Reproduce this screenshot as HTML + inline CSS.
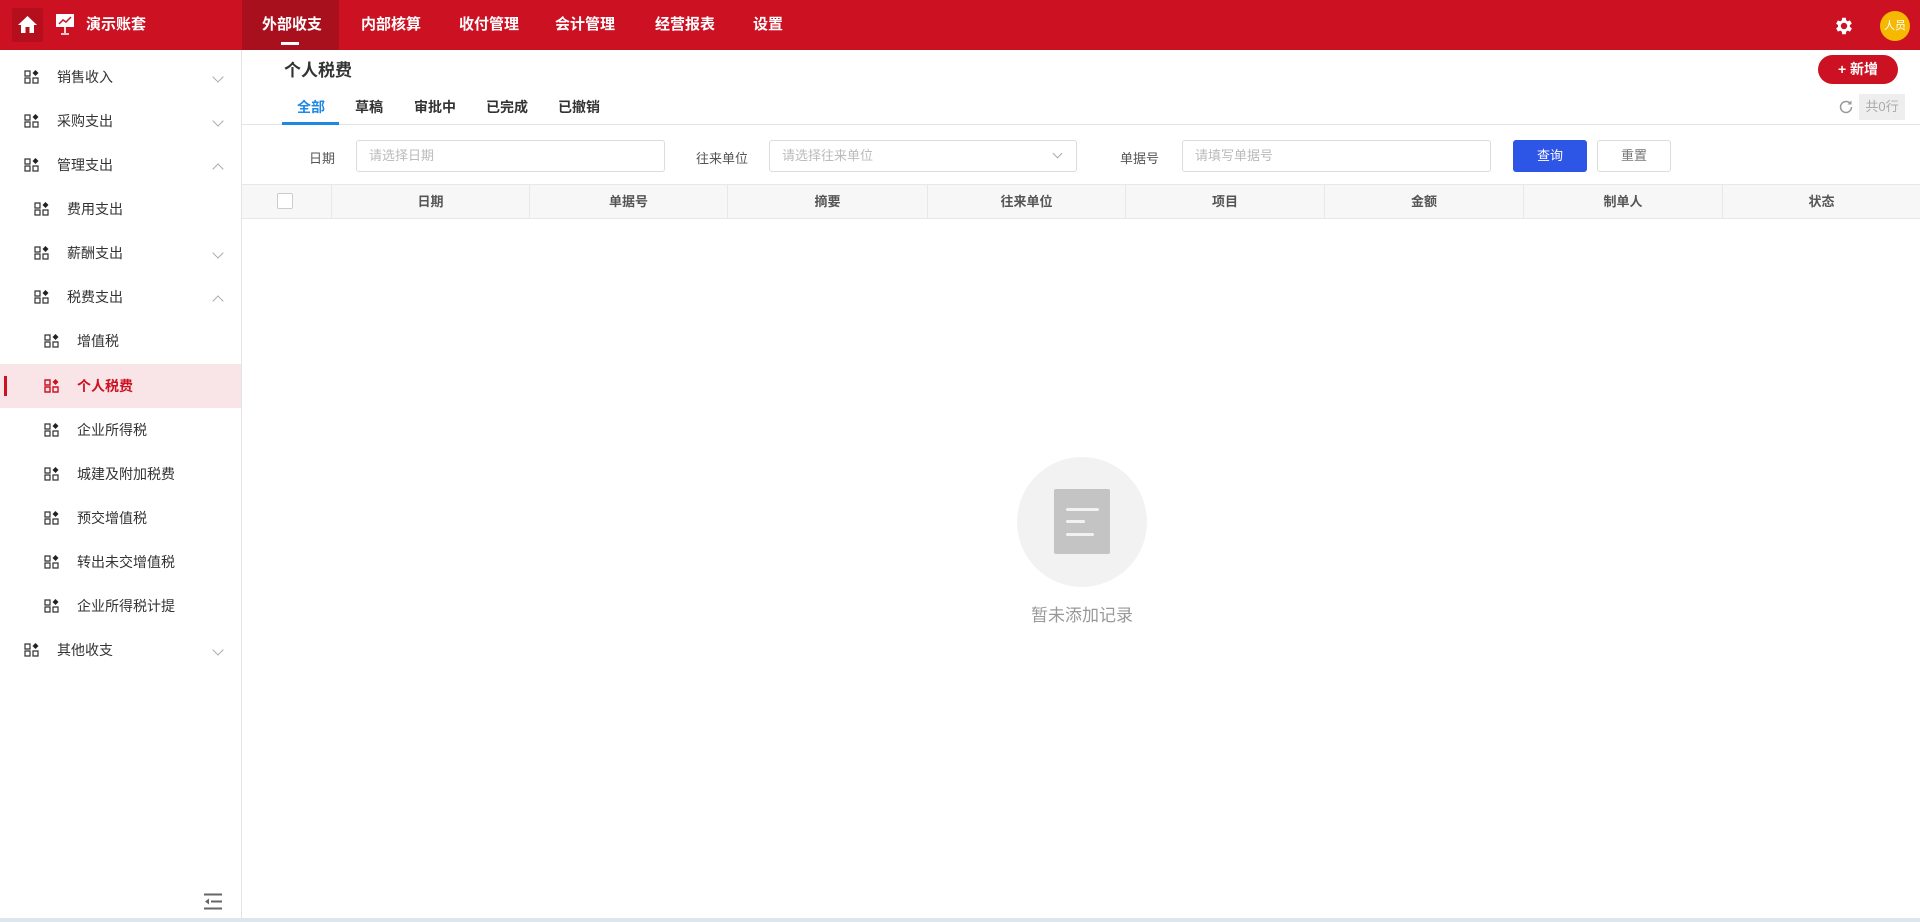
<!DOCTYPE html>
<html><head><meta charset="utf-8"><style>
*{box-sizing:border-box;margin:0;padding:0}
body{width:1920px;height:922px;overflow:hidden;background:#fff;font-family:"Liberation Sans","Noto Sans CJK SC",sans-serif;position:relative;color:#333}
.abs{position:absolute}
.hdr{left:0;top:0;width:1920px;height:50px;background:#cc1122}
.nav{top:0;height:50px;line-height:50px;color:#fff;font-size:15px;font-weight:bold}
.side{left:0;top:50px;width:242px;height:868px;border-right:1px solid #e4e4e4;background:#fff}
.mi{height:44px;line-height:44px;font-size:14px;color:#333;position:absolute;left:0;width:241px}
.ic{position:absolute;top:15px;width:16px;height:14px}
.chev{position:absolute;left:214px;top:18px;width:8px;height:8px;border-right:1px solid #aaa;border-bottom:1px solid #aaa}
.tab{top:97px;font-size:14px;font-weight:bold;color:#333}
.lbl{font-size:13px;color:#555;top:148px}
.inp{top:140px;height:32px;border:1px solid #dcdcdc;border-radius:3px;font-size:13px;color:#bbb;line-height:30px;padding-left:12px}
.th{top:184px;height:35px;background:#f7f7f7;border-top:1px solid #e8e8e8;border-bottom:1px solid #e8e8e8}
.col{top:184px;height:35px;line-height:35px;text-align:center;font-size:13px;font-weight:bold;color:#555;border-left:1px solid #e8e8e8}
</style></head><body>
<div class="abs hdr"></div>
<div class="abs" style="left:12px;top:8px;width:31px;height:34px;background:#b50f1e;border-radius:2px"></div>
<svg class="abs" style="left:17px;top:15px" width="21" height="19" viewBox="0 0 21 19"><path d="M10.5 1 L20 10 H17 V18 H12.5 V12 H8.5 V18 H4 V10 H1Z" fill="#fff"/></svg>
<svg class="abs" style="left:55px;top:13px" width="20" height="22" viewBox="0 0 20 22"><rect x="1" y="1" width="18" height="13" fill="#fff"/><path d="M4 11 L8 7 L11 9 L16 4" stroke="#cc1122" stroke-width="1.5" fill="none"/><path d="M10 14 V20 M6 21 H14" stroke="#fff" stroke-width="1.6"/></svg>
<div class="abs nav" style="left:86px">演示账套</div>
<div class="abs" style="left:242px;top:0;width:97px;height:50px;background:#a8101d"></div>
<div class="abs nav" style="left:262px">外部收支</div>
<div class="abs" style="left:281px;top:42px;width:18px;height:3px;background:#fff"></div>
<div class="abs nav" style="left:361px">内部核算</div>
<div class="abs nav" style="left:459px">收付管理</div>
<div class="abs nav" style="left:555px">会计管理</div>
<div class="abs nav" style="left:655px">经营报表</div>
<div class="abs nav" style="left:753px">设置</div>
<svg class="abs" style="left:1833px;top:15px" width="22" height="22" viewBox="0 0 24 24"><path fill="#fff" d="M19.4 13a7.5 7.5 0 000-2l2.1-1.6-2-3.5-2.5 1a7 7 0 00-1.7-1L15 3h-4l-.4 2.9a7 7 0 00-1.7 1l-2.5-1-2 3.5L6.5 11a7.5 7.5 0 000 2l-2.1 1.6 2 3.5 2.5-1a7 7 0 001.7 1L11 21h4l.4-2.9a7 7 0 001.7-1l2.5 1 2-3.5zM13 15.5A3.5 3.5 0 1113 8.5a3.5 3.5 0 010 7z" transform="translate(-1 0)"/></svg>
<div class="abs" style="left:1880px;top:11px;width:30px;height:30px;border-radius:50%;background:#f6b800;color:#fff;font-size:11px;line-height:30px;text-align:center">人员</div>

<div class="abs side">
<div class="abs" style="left:0;top:314px;width:241px;height:44px;background:#f9e5e7"></div>
<div class="abs" style="left:4px;top:326px;width:3px;height:20px;background:#cc1122"></div>
</div>
<div id="menu"></div>
<script></script>
<div class="abs" style="left:0;top:918px;width:1920px;height:4px;background:#dde6ec"></div>

<!-- menu items -->
<div class="mi" style="top:55px"><svg class="ic" style="left:24px" viewBox="0 0 16 14"><path d="M1 1h5v5H1zM1 8h5v5H1zM9 8h5v5H9z" fill="none" stroke="#333" stroke-width="1.2"/><path d="M11.5 0l3 3-3 3-3-3z" fill="#222"/></svg><span style="position:absolute;left:57px">销售收入</span><i class="chev" style="transform:rotate(45deg)"></i></div>
<div class="mi" style="top:99px"><svg class="ic" style="left:24px" viewBox="0 0 16 14"><path d="M1 1h5v5H1zM1 8h5v5H1zM9 8h5v5H9z" fill="none" stroke="#333" stroke-width="1.2"/><path d="M11.5 0l3 3-3 3-3-3z" fill="#222"/></svg><span style="position:absolute;left:57px">采购支出</span><i class="chev" style="transform:rotate(45deg)"></i></div>
<div class="mi" style="top:143px"><svg class="ic" style="left:24px" viewBox="0 0 16 14"><path d="M1 1h5v5H1zM1 8h5v5H1zM9 8h5v5H9z" fill="none" stroke="#333" stroke-width="1.2"/><path d="M11.5 0l3 3-3 3-3-3z" fill="#222"/></svg><span style="position:absolute;left:57px">管理支出</span><i class="chev" style="transform:rotate(-135deg);top:22px"></i></div>
<div class="mi" style="top:187px"><svg class="ic" style="left:34px" viewBox="0 0 16 14"><path d="M1 1h5v5H1zM1 8h5v5H1zM9 8h5v5H9z" fill="none" stroke="#333" stroke-width="1.2"/><path d="M11.5 0l3 3-3 3-3-3z" fill="#222"/></svg><span style="position:absolute;left:67px">费用支出</span></div>
<div class="mi" style="top:231px"><svg class="ic" style="left:34px" viewBox="0 0 16 14"><path d="M1 1h5v5H1zM1 8h5v5H1zM9 8h5v5H9z" fill="none" stroke="#333" stroke-width="1.2"/><path d="M11.5 0l3 3-3 3-3-3z" fill="#222"/></svg><span style="position:absolute;left:67px">薪酬支出</span><i class="chev" style="transform:rotate(45deg)"></i></div>
<div class="mi" style="top:275px"><svg class="ic" style="left:34px" viewBox="0 0 16 14"><path d="M1 1h5v5H1zM1 8h5v5H1zM9 8h5v5H9z" fill="none" stroke="#333" stroke-width="1.2"/><path d="M11.5 0l3 3-3 3-3-3z" fill="#222"/></svg><span style="position:absolute;left:67px">税费支出</span><i class="chev" style="transform:rotate(-135deg);top:22px"></i></div>
<div class="mi" style="top:319px"><svg class="ic" style="left:44px" viewBox="0 0 16 14"><path d="M1 1h5v5H1zM1 8h5v5H1zM9 8h5v5H9z" fill="none" stroke="#333" stroke-width="1.2"/><path d="M11.5 0l3 3-3 3-3-3z" fill="#222"/></svg><span style="position:absolute;left:77px">增值税</span></div>
<div class="mi" style="top:364px;color:#cc1122;font-weight:bold"><svg class="ic" style="left:44px" viewBox="0 0 16 14"><path d="M1 1h5v5H1zM1 8h5v5H1zM9 8h5v5H9z" fill="none" stroke="#cc1122" stroke-width="1.4"/><path d="M11.5 0l3 3-3 3-3-3z" fill="#cc1122"/></svg><span style="position:absolute;left:77px">个人税费</span></div>
<div class="mi" style="top:408px"><svg class="ic" style="left:44px" viewBox="0 0 16 14"><path d="M1 1h5v5H1zM1 8h5v5H1zM9 8h5v5H9z" fill="none" stroke="#333" stroke-width="1.2"/><path d="M11.5 0l3 3-3 3-3-3z" fill="#222"/></svg><span style="position:absolute;left:77px">企业所得税</span></div>
<div class="mi" style="top:452px"><svg class="ic" style="left:44px" viewBox="0 0 16 14"><path d="M1 1h5v5H1zM1 8h5v5H1zM9 8h5v5H9z" fill="none" stroke="#333" stroke-width="1.2"/><path d="M11.5 0l3 3-3 3-3-3z" fill="#222"/></svg><span style="position:absolute;left:77px">城建及附加税费</span></div>
<div class="mi" style="top:496px"><svg class="ic" style="left:44px" viewBox="0 0 16 14"><path d="M1 1h5v5H1zM1 8h5v5H1zM9 8h5v5H9z" fill="none" stroke="#333" stroke-width="1.2"/><path d="M11.5 0l3 3-3 3-3-3z" fill="#222"/></svg><span style="position:absolute;left:77px">预交增值税</span></div>
<div class="mi" style="top:540px"><svg class="ic" style="left:44px" viewBox="0 0 16 14"><path d="M1 1h5v5H1zM1 8h5v5H1zM9 8h5v5H9z" fill="none" stroke="#333" stroke-width="1.2"/><path d="M11.5 0l3 3-3 3-3-3z" fill="#222"/></svg><span style="position:absolute;left:77px">转出未交增值税</span></div>
<div class="mi" style="top:584px"><svg class="ic" style="left:44px" viewBox="0 0 16 14"><path d="M1 1h5v5H1zM1 8h5v5H1zM9 8h5v5H9z" fill="none" stroke="#333" stroke-width="1.2"/><path d="M11.5 0l3 3-3 3-3-3z" fill="#222"/></svg><span style="position:absolute;left:77px">企业所得税计提</span></div>
<div class="mi" style="top:628px"><svg class="ic" style="left:24px" viewBox="0 0 16 14"><path d="M1 1h5v5H1zM1 8h5v5H1zM9 8h5v5H9z" fill="none" stroke="#333" stroke-width="1.2"/><path d="M11.5 0l3 3-3 3-3-3z" fill="#222"/></svg><span style="position:absolute;left:57px">其他收支</span><i class="chev" style="transform:rotate(45deg)"></i></div>
<svg class="abs" style="left:203px;top:893px" width="20" height="17" viewBox="0 0 20 17"><path d="M1 1.5h18M8 8.5h11M1 15.5h18" stroke="#666" stroke-width="2"/><path d="M2 8.5l4-3v6z" fill="#666"/></svg>

<!-- main -->
<div class="abs" style="left:284px;top:56px;font-size:17px;font-weight:bold;color:#333">个人税费</div>
<div class="abs" style="left:1818px;top:55px;width:80px;height:29px;border-radius:15px;background:#cc1122;color:#fff;font-size:14px;font-weight:bold;line-height:29px;text-align:center">+ 新增</div>
<div class="abs tab" style="left:297px;color:#1e88e5">全部</div>
<div class="abs tab" style="left:355px">草稿</div>
<div class="abs tab" style="left:414px">审批中</div>
<div class="abs tab" style="left:486px">已完成</div>
<div class="abs tab" style="left:558px">已撤销</div>
<div class="abs" style="left:242px;top:124px;width:1678px;height:1px;background:#e4e4e4"></div>
<div class="abs" style="left:282px;top:122px;width:57px;height:3px;background:#1e88e5"></div>
<svg class="abs" style="left:1838px;top:99px" width="16" height="16" viewBox="0 0 16 16"><path d="M13.5 8A5.5 5.5 0 118 2.5a5.5 5.5 0 014.5 2.3" fill="none" stroke="#999" stroke-width="1.5"/><path d="M13.5 1.5v4h-4z" fill="#999"/></svg>
<div class="abs" style="left:1859px;top:94px;width:46px;height:26px;background:#eee;color:#aaa;font-size:13px;line-height:26px;text-align:center">共0行</div>

<div class="abs lbl" style="left:309px">日期</div>
<div class="abs inp" style="left:356px;width:309px">请选择日期</div>
<div class="abs lbl" style="left:696px">往来单位</div>
<div class="abs inp" style="left:769px;width:308px">请选择往来单位</div>
<div class="abs" style="left:1054px;top:150px;width:7px;height:7px;border-right:1px solid #aaa;border-bottom:1px solid #aaa;transform:rotate(45deg)"></div>
<div class="abs lbl" style="left:1120px">单据号</div>
<div class="abs inp" style="left:1182px;width:309px">请填写单据号</div>
<div class="abs" style="left:1513px;top:140px;width:74px;height:32px;border-radius:3px;background:#2d55e6;color:#fff;font-size:13px;line-height:32px;text-align:center">查询</div>
<div class="abs" style="left:1597px;top:140px;width:74px;height:32px;border-radius:3px;border:1px solid #dcdcdc;color:#777;font-size:13px;line-height:30px;text-align:center">重置</div>

<div class="abs th" style="left:242px;width:1678px"></div>
<div class="abs" style="left:277px;top:193px;width:16px;height:16px;border:1px solid #ccc;border-radius:2px;background:#fff"></div>
<div class="abs col" style="left:331px;width:198px">日期</div>
<div class="abs col" style="left:529px;width:198px">单据号</div>
<div class="abs col" style="left:727px;width:200px">摘要</div>
<div class="abs col" style="left:927px;width:198px">往来单位</div>
<div class="abs col" style="left:1125px;width:199px">项目</div>
<div class="abs col" style="left:1324px;width:199px">金额</div>
<div class="abs col" style="left:1523px;width:199px">制单人</div>
<div class="abs col" style="left:1722px;width:198px">状态</div>

<div class="abs" style="left:1017px;top:457px;width:130px;height:130px;border-radius:50%;background:#f2f2f2"></div>
<div class="abs" style="left:1054px;top:489px;width:56px;height:65px;background:#c4c4c4;border-radius:2px"></div>
<div class="abs" style="left:1066px;top:508px;width:33px;height:3px;border-radius:2px;background:#f2f2f2"></div>
<div class="abs" style="left:1066px;top:520px;width:19px;height:3px;border-radius:2px;background:#f2f2f2"></div>
<div class="abs" style="left:1066px;top:533px;width:28px;height:3px;border-radius:2px;background:#f2f2f2"></div>
<div class="abs" style="left:982px;top:601px;width:200px;text-align:center;font-size:17px;color:#999">暂未添加记录</div>
</body></html>
